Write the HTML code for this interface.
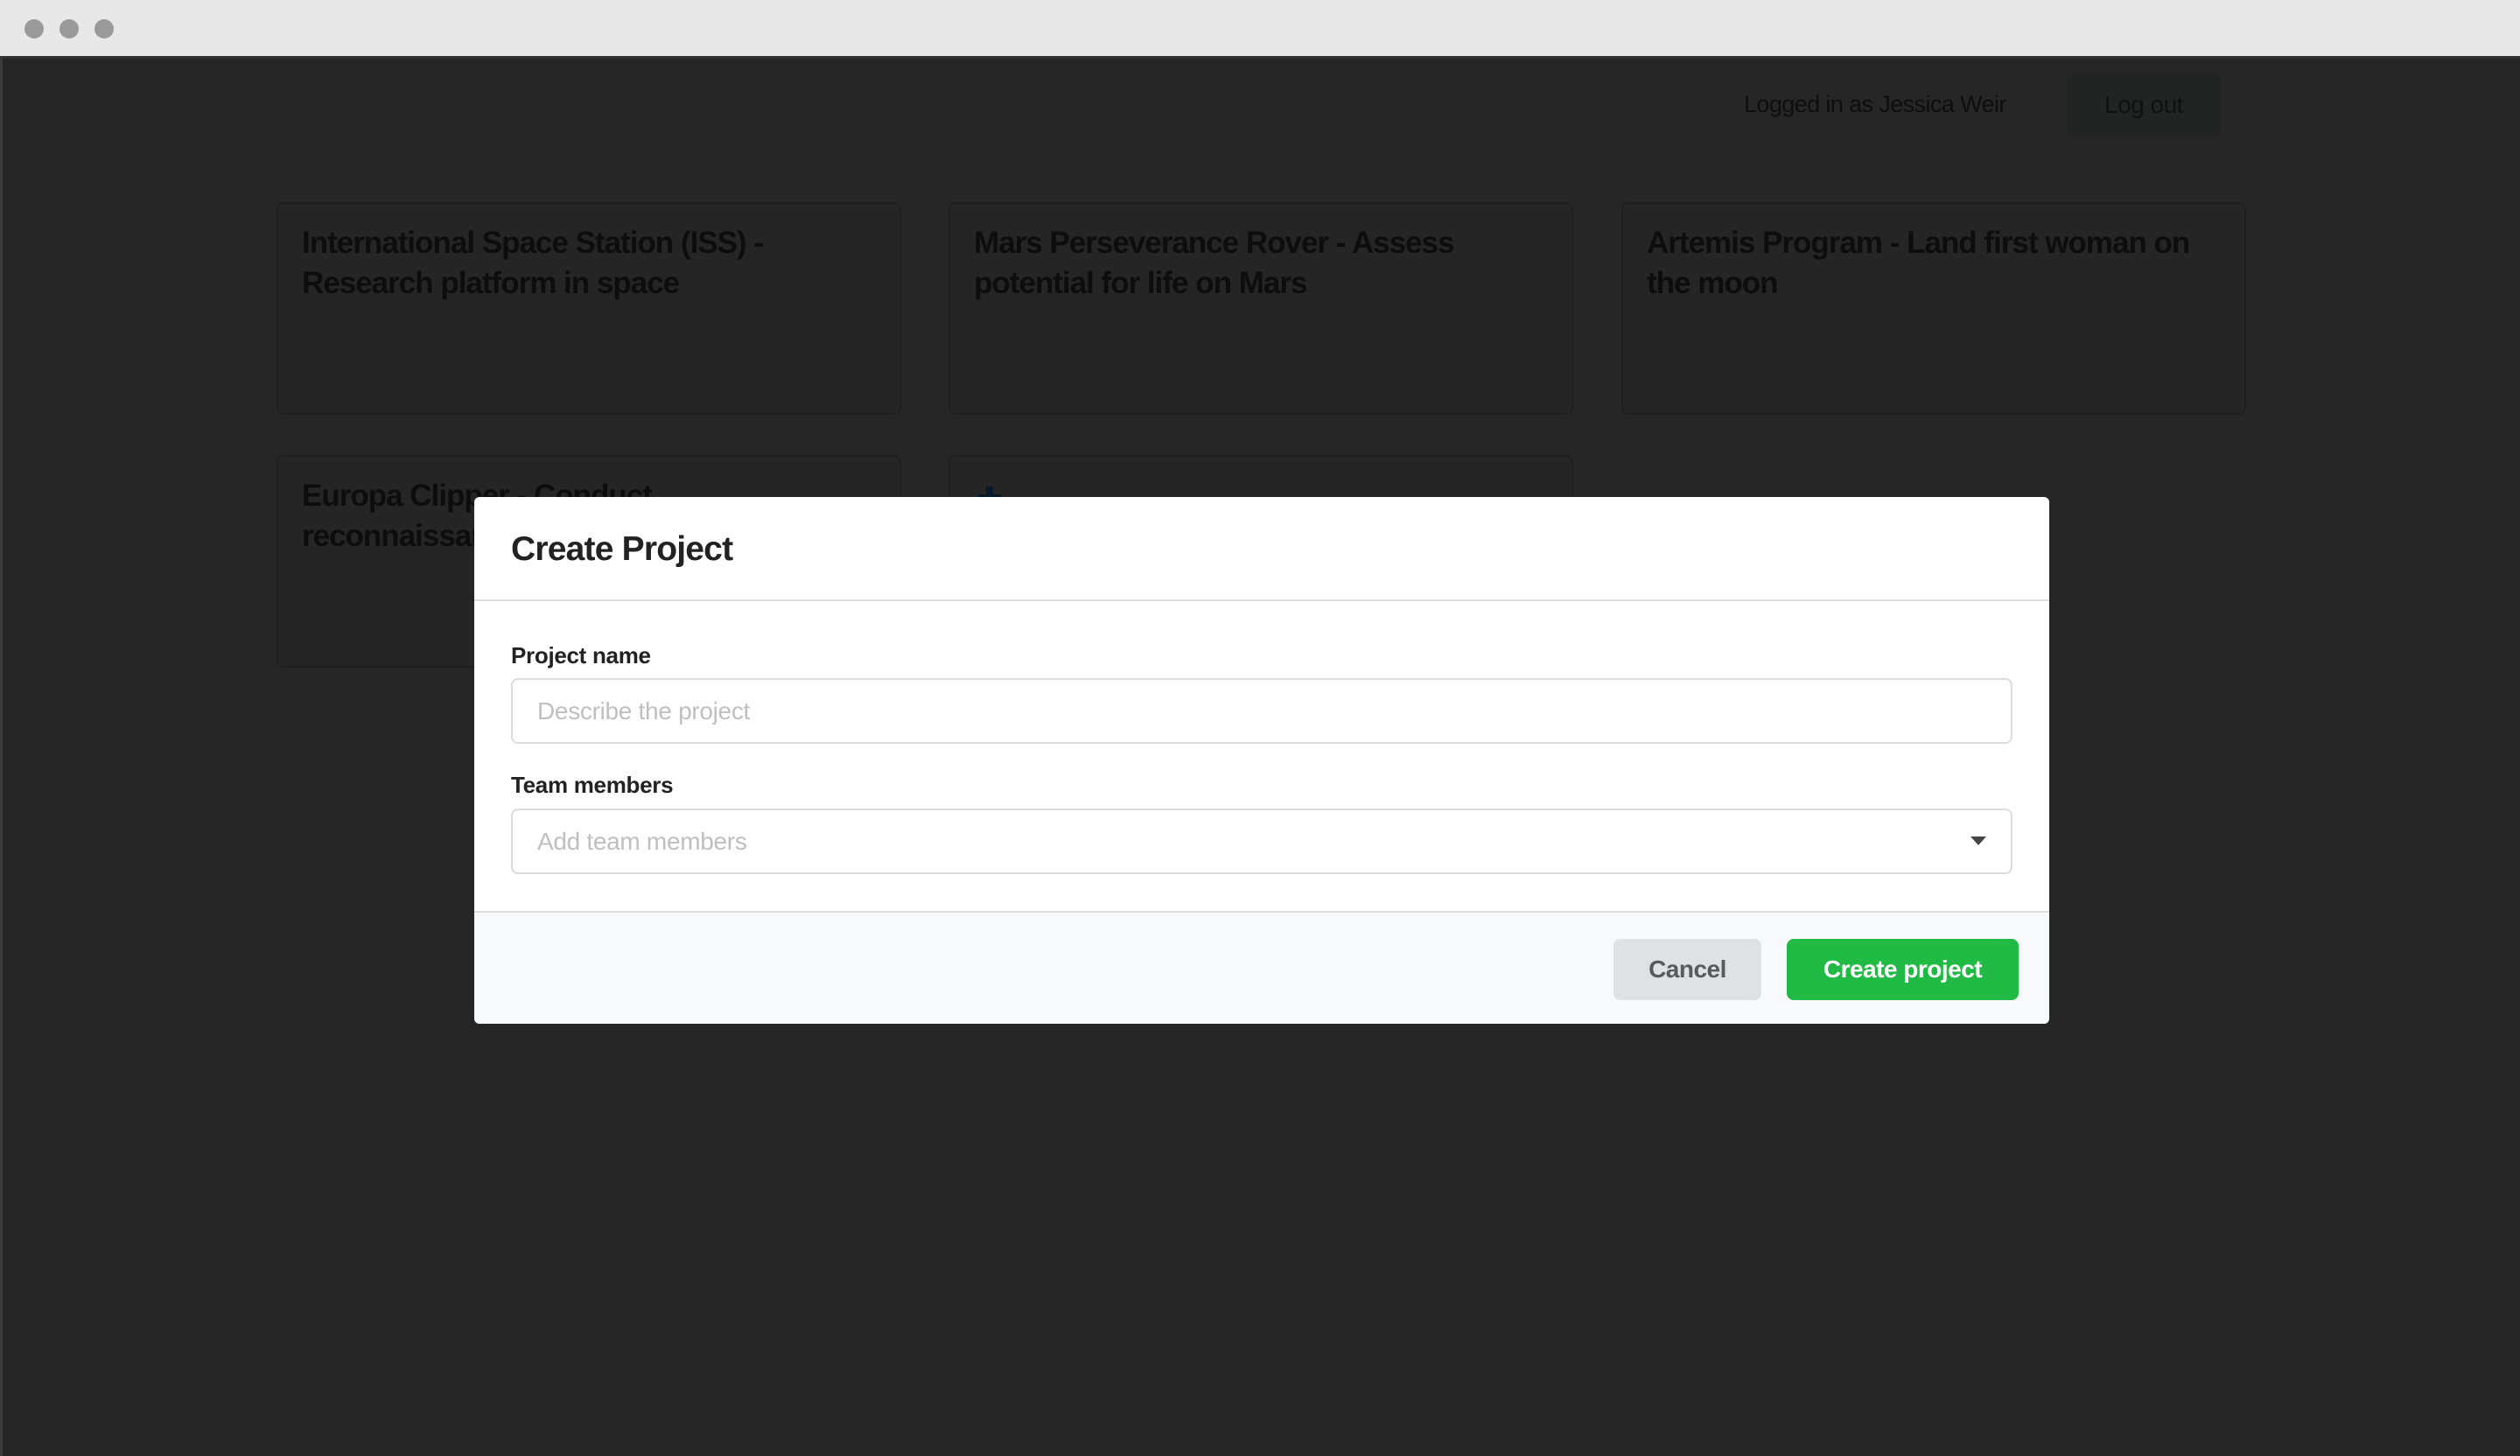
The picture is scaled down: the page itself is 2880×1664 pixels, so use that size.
<!DOCTYPE html>
<html><head><meta charset="utf-8"><style>
*{box-sizing:border-box;margin:0;padding:0}
body{width:2880px;height:1664px;overflow:hidden;background:#262626;font-family:"Liberation Sans",sans-serif;position:relative}
.tb{position:absolute;left:0;top:0;width:2880px;height:64px;background:#e8e8e8}
.dot{position:absolute;top:22px;width:22px;height:22px;border-radius:50%;background:#9a9a9a}
.win{position:absolute;left:0;top:64px;width:2880px;height:1600px;background:#262626;border-left:3px solid #3a3a3a;border-top:3px solid #303236}
.user{position:absolute;left:1993px;top:104px;font-size:27px;color:#0e0e0e;letter-spacing:-0.6px;white-space:nowrap}
.logout{position:absolute;left:2362px;top:84px;width:176px;height:72px;border-radius:8px;background:#222423;color:#111;font-size:28px;text-align:center;line-height:72px;letter-spacing:-0.5px}
.card{position:absolute;width:714px;height:243px;border:2px solid #1f1f1f;border-radius:8px;background:#252525;padding:22px 27px}
.card h3{font-size:35px;line-height:46px;color:#0d0d0d;font-weight:bold;letter-spacing:-1px;white-space:nowrap}
.modal{position:absolute;left:542px;top:568px;width:1800px;height:602px;background:#fff;border-radius:6px;overflow:hidden}
.mh{height:119px;border-bottom:2px solid #dedede;padding-left:42px;font-size:39px;font-weight:bold;color:#222;line-height:119px;letter-spacing:-0.8px}
.lbl{position:absolute;left:42px;font-size:26px;font-weight:bold;color:#222;letter-spacing:-0.3px}
.inp{position:absolute;left:42px;width:1716px;height:75px;border:2px solid #dcdcdc;border-radius:8px;padding-left:28px;font-size:28px;color:#bfbfbf;line-height:71px;letter-spacing:-0.3px}
.ft{position:absolute;left:0;top:473px;width:1800px;height:129px;background:#f8f9fa;border-top:2px solid #dedede}
.btn{position:absolute;top:30px;height:70px;border-radius:8px;font-size:28px;font-weight:bold;text-align:center;line-height:70px;letter-spacing:-0.5px}
</style></head><body>
<div class="tb"><div class="dot" style="left:28px"></div><div class="dot" style="left:68px"></div><div class="dot" style="left:108px"></div></div>
<div class="win"></div>
<div class="user">Logged in as Jessica Weir</div>
<div class="logout">Log out</div>
<div class="card" style="left:316px;top:231px"><h3>International Space Station (ISS) -<br>Research platform in space</h3></div>
<div class="card" style="left:1084px;top:231px"><h3>Mars Perseverance Rover - Assess<br>potential for life on Mars</h3></div>
<div class="card" style="left:1853px;top:231px"><h3>Artemis Program - Land first woman on<br>the moon</h3></div>
<div class="card" style="left:316px;top:520px"><h3>Europa Clipper - Conduct<br>reconnaissance</h3></div>
<div class="card" style="left:1084px;top:520px"><div style="position:absolute;left:32px;top:34px;width:26px;height:26px"><div style="position:absolute;left:9px;top:0;width:8px;height:26px;background:#06182a"></div><div style="position:absolute;left:0;top:9px;width:26px;height:8px;background:#06182a"></div></div></div>
<div class="modal">
<div class="mh">Create Project</div>
<div class="lbl" style="top:166px">Project name</div>
<div class="inp" style="top:207px">Describe the project</div>
<div class="lbl" style="top:314px">Team members</div>
<div class="inp" style="top:356px">Add team members<svg style="position:absolute;right:28px;top:30px" width="18" height="10"><path d="M0 0H18L9 10Z" fill="#444"/></svg></div>
<div class="ft">
<div class="btn" style="left:1302px;width:169px;background:#e0e1e2;color:#5a5a5a">Cancel</div>
<div class="btn" style="left:1500px;width:265px;background:#21ba45;color:#fff">Create project</div>
</div>
</div>
</body></html>
